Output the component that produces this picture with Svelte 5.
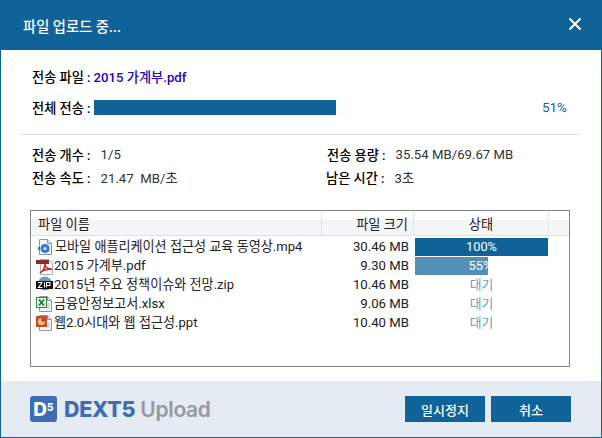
<script>
	const files = [
		{ icon: 'mp4', name: '모바일 애플리케이션 접근성 교육 동영상.mp4', size: '30.46 MB', pct: 100 },
		{ icon: 'pdf', name: '2015 가계부.pdf', size: '9.30 MB', pct: 55 },
		{ icon: 'zip', name: '2015년 주요 정책이슈와 전망.zip', size: '10.46 MB' },
		{ icon: 'xls', name: '금융안정보고서.xlsx', size: '9.06 MB' },
		{ icon: 'ppt', name: '웹2.0시대와 웹 접근성.ppt', size: '10.40 MB' }
	];
</script>

{#snippet sheet()}
	<path d="M3.5 1.5h8l4 4v11h-12z" fill="#f2f5fa" stroke="#8a96a6" />
	<path d="M11.5 1.5v4h4" fill="#d6dfeb" stroke="#8a96a6" />
	<path d="M11 9h3M11 11h3M11 13h3" stroke="#b4c2d4" />
{/snippet}

<div class="dialog">
	<header class="title">
		<h1>파일 업로드 중...</h1>
		<svg class="close" width="14" height="14" viewBox="0 0 14 14">
			<path d="M1.5 1.5l11 11M12.5 1.5l-11 11" stroke="#fff" stroke-width="2" />
		</svg>
	</header>

	<main class="body">
		<section class="summary">
			<div class="line">
				<span class="label">전송 파일 :</span>
				<span class="current">2015 가계부.pdf</span>
			</div>
			<div class="line total">
				<span class="label">전체 전송 :</span>
				<div class="track"><div class="bar"></div></div>
				<span class="percent">51%</span>
			</div>
		</section>

		<section class="stats">
			<div class="stat"><span class="label">전송 개수 :</span><span class="value">1/5</span></div>
			<div class="stat"><span class="label">전송 용량 :</span><span class="value">35.54 MB/69.67 MB</span></div>
			<div class="stat"><span class="label">전송 속도 :</span><span class="value">21.47 &nbsp;MB/초</span></div>
			<div class="stat left"><span class="label">남은 시간 :</span><span class="value">3초</span></div>
		</section>

		<section class="list">
			<div class="head">
				<div class="c-name">파일 이름</div>
				<div class="c-size">파일 크기</div>
				<div class="c-state">상태</div>
				<div class="c-rest"></div>
			</div>
			{#each files as f}
				<div class="row">
					<div class="c-name">
						<svg class="icon" width="18" height="18" viewBox="0 0 18 18">
							{#if f.icon === 'mp4'}
								{@render sheet()}
								<circle cx="9" cy="10.5" r="4.5" fill="#2f7fd6" />
								<circle cx="9" cy="10.5" r="1.6" fill="#dcecff" />
								<path d="M2 9h2v3H2z" fill="#4a6f9c" />
							{:else if f.icon === 'pdf'}
								<path d="M4.5 2.5h8l4 4v11h-12z" fill="#fff" stroke="#b8a8a8" />
								<path d="M0 3h13v4H0z" fill="#8e2a2c" />
								<path d="M4 16c3-2 5-6 5-9 0 3 2 5 7 5-5 0-9 1-12 4z" fill="none" stroke="#c8242b" stroke-width="1.5" />
							{:else if f.icon === 'zip'}
								<circle cx="9" cy="7.5" r="7" fill="#6d9cc9" />
								<path d="M0 5h17v8H0z" fill="#111" />
								<path d="M2 6.5h4L2.5 11.5H6.5M8.5 6.5v5M10.5 11.5v-5h3.5v3h-3.5" fill="none" stroke="#fff" stroke-width="1.1" />
							{:else if f.icon === 'xls'}
								{@render sheet()}
								<path d="M0 2h11v11H0z" fill="#2e8b3d" />
								<path d="M1 3h9v9H1z" fill="#e8f3e4" />
								<path d="M3 4.5l5 6M8 4.5l-5 6" stroke="#1f7a30" stroke-width="1.7" />
							{:else}
								{@render sheet()}
								<path d="M0 2h11v11H0z" fill="#c0502a" />
								<circle cx="5.5" cy="7.5" r="3.5" fill="#f1c48d" />
								<path d="M5.5 7.5V4a3.5 3.5 0 0 1 3.5 3.5z" fill="#a5341c" />
							{/if}
						</svg>
						<span class="fname" class:spaced={f.icon === 'mp4'}>{f.name}</span>
					</div>
					<div class="c-size">{f.size}</div>
					<div class="c-state">
						{#if f.pct === 100}
							<div class="done">100%</div>
						{:else if f.pct}
							<div class="partial" style="width: {f.pct}%"><span>{f.pct}%</span></div>
						{:else}
							<span class="wait">대기</span>
						{/if}
					</div>
					<div class="c-rest"></div>
				</div>
			{/each}
		</section>
	</main>

	<footer class="foot">
		<div class="logo">
			<div class="mark">D<sup>5</sup></div>
			<span class="dext">DEXT5</span>
			<span class="upload">Upload</span>
		</div>
		<div class="buttons">
			<button>일시정지</button>
			<button>취소</button>
		</div>
	</footer>
</div>

<style>
	:global(body) {
		margin: 0;
		background: #fff;
	}

	.dialog {
		width: 602px;
		height: 438px;
		box-sizing: border-box;
		display: flex;
		flex-direction: column;
		border: 1px solid #0f6399;
		border-top: 0;
		font-family: Roboto, "Noto Sans CJK KR", sans-serif;
		font-size: 13.2px;
		color: #222;
		overflow: hidden;
	}

	.title {
		height: 50px;
		margin: 0 -1px;
		flex: none;
		background: #0f6399;
		display: flex;
		align-items: center;
		justify-content: space-between;
		padding: 0 20px 0 23px;
	}

	h1 {
		margin: 0;
		font-size: 14.3px;
		font-weight: 500;
		color: #fff;
	}

	.close {
		margin-bottom: 2px;
	}

	.body {
		flex: 1;
		padding: 0 21px 0 19px;
	}

	.summary {
		padding: 17px 0 0 12px;
		height: 67px;
		border-bottom: 1px solid #dedede;
	}

	.line {
		display: flex;
		align-items: center;
		height: 18px;
	}

	.total {
		margin-top: 13px;
	}

	.label {
		font-weight: 500;
		color: #000;
	}

	.current {
		margin-left: 3px;
		color: #2a00b8;
		font-weight: 500;
	}

	.track {
		width: 242px;
		margin-left: 3px;
	}

	.bar {
		height: 15px;
		background: #0f6399;
	}

	.percent {
		margin-left: auto;
		margin-right: 13px;
		color: #0f6399;
		font-size: 13.5px;
	}

	.stats {
		display: grid;
		grid-template-columns: 295px 1fr;
		align-content: start;
		row-gap: 5px;
		padding: 10px 0 0 12px;
		height: 53px;
	}

	.stat {
		display: flex;
		gap: 10px;
		height: 18px;
		align-items: center;
	}

	.left {
		margin-left: -1px;
	}

	.value {
		color: #333;
	}

	.list {
		margin: 12px 0 0 10px;
		width: 540px;
		height: 157px;
		box-sizing: border-box;
		border: 1px solid #85858c;
		padding-top: 1px;
	}

	.head {
		display: flex;
		height: 23px;
		align-items: center;
		background: linear-gradient(#fff 0 35%, #f4f5f6 35%);
		border-bottom: 1px solid #e0e2e4;
		margin-bottom: 2px;
	}

	.head > div {
		height: 100%;
		display: flex;
		align-items: center;
		box-sizing: border-box;
		border-right: 1px solid #e4e4e4;
	}

	.head .c-state {
		justify-content: center;
	}

	.head .c-size {
		justify-content: flex-end;
	}

	.head .c-name {
		padding-left: 7px;
	}

	.head .c-rest {
		border: 0;
	}

	.c-name {
		width: 291px;
		flex: none;
	}

	.c-size {
		width: 92px;
		flex: none;
		padding-right: 5px;
		box-sizing: border-box;
		text-align: right;
	}

	.c-state {
		width: 135px;
		flex: none;
		text-align: center;
	}

	.c-rest {
		flex: 1;
	}

	.row {
		display: flex;
		height: 19px;
		align-items: flex-start;
		color: #222;
		line-height: 17px;
	}

	.row .c-name {
		display: flex;
		align-items: flex-start;
		padding-left: 5px;
		box-sizing: border-box;
		white-space: nowrap;
		font-size: 13.1px;
	}

	.row .c-state {
		padding: 0 1px;
		box-sizing: border-box;
		height: 18px;
		line-height: 17px;
		font-size: 12.8px;
	}

	.spaced {
		margin-left: 1px;
	}

	.done {
		background: #0f6399;
		color: #fff;
		height: 18px;
	}

	.partial {
		background: #548fb8;
		color: #fff;
		overflow: hidden;
		height: 18px;
	}

	.partial span {
		display: block;
		width: 131px;
	}

	.wait {
		color: #6a9cc0;
	}

	.foot {
		flex: none;
		height: 56px;
		background: #e4ebf3;
		display: flex;
		align-items: center;
		justify-content: space-between;
		padding: 0 30px 0 29px;
	}

	.logo {
		display: flex;
		align-items: center;
		gap: 5px;
		font-family: Inter, "Open Sans", sans-serif;
		font-size: 21.5px;
		letter-spacing: -0.3px;
	}

	.mark {
		width: 27px;
		height: 26px;
		border-radius: 3px;
		background: #3f6db5;
		color: #fff;
		font-weight: 800;
		font-size: 19px;
		letter-spacing: 0;
		display: flex;
		align-items: center;
		justify-content: center;
		margin-right: 2px;
	}

	.mark sup {
		font-size: 10px;
		line-height: 1;
		align-self: flex-start;
		margin-top: 6px;
	}

	.dext {
		color: #3f6db5;
		font-weight: 800;
	}

	.upload {
		color: #96999e;
		font-weight: 600;
		font-size: 21px;
	}

	.buttons {
		display: flex;
		gap: 6px;
	}

	button {
		width: 80px;
		height: 26px;
		border: 0;
		padding: 0;
		background: #0f6399;
		color: #fff;
		font: 500 13px Roboto, "Noto Sans CJK KR", sans-serif;
	}
</style>
